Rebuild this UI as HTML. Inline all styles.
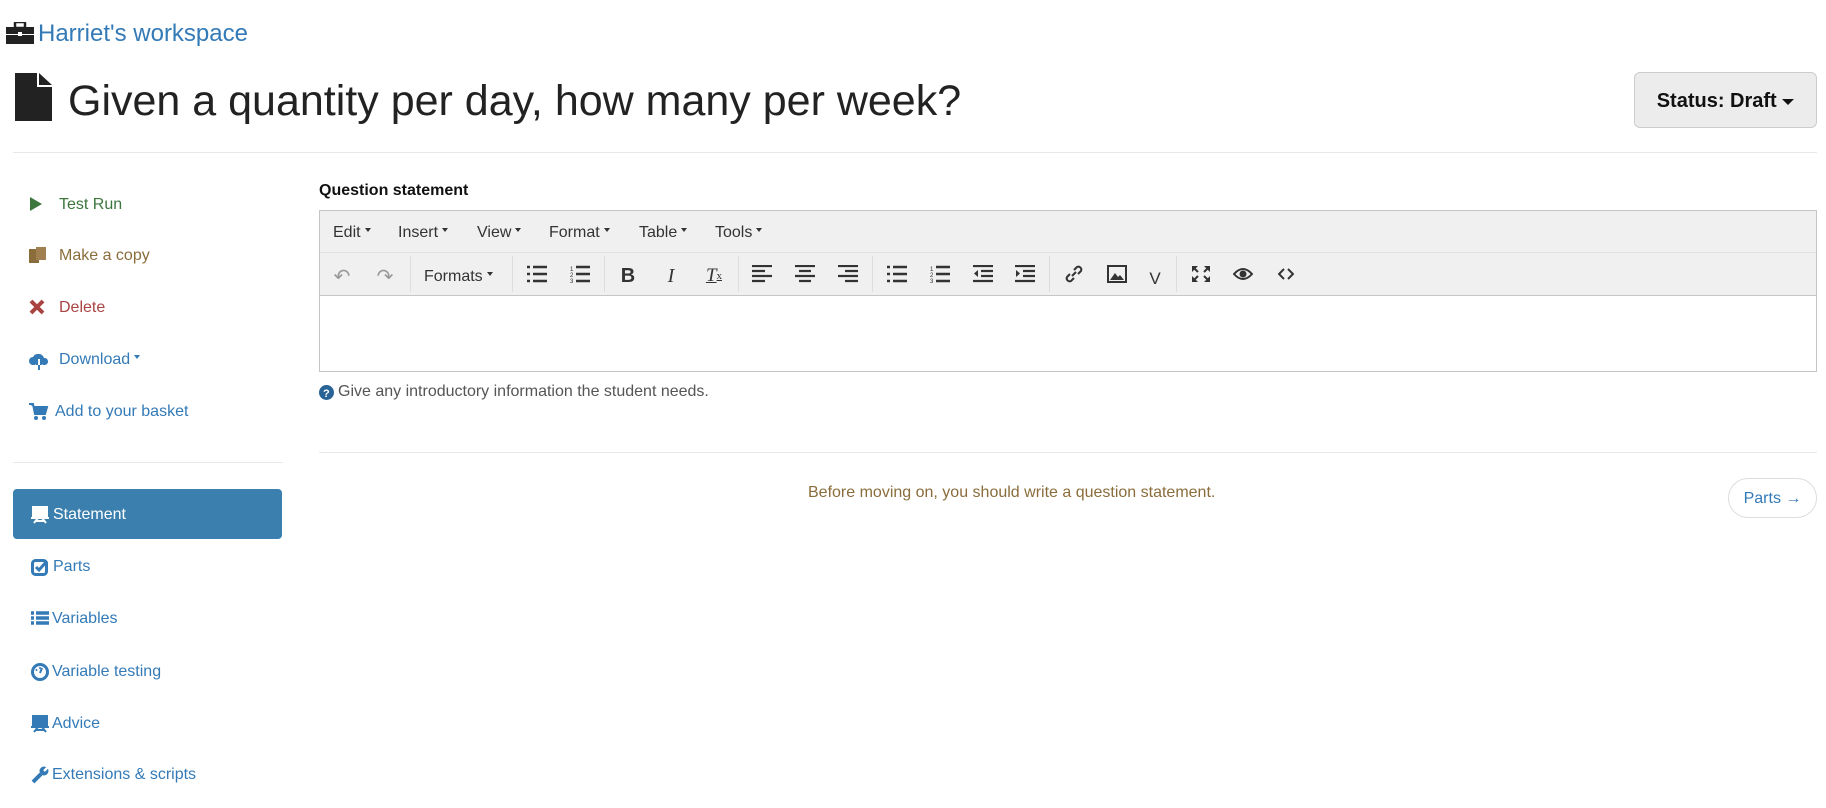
<!DOCTYPE html>
<html><head><meta charset="utf-8"><style>
*{box-sizing:border-box;margin:0;padding:0}
body{width:1826px;height:808px;background:#fff;font-family:"Liberation Sans",sans-serif;position:relative;overflow:hidden;color:#222}
.a{position:absolute;white-space:nowrap}
.hr{position:absolute;height:1px;background:#e8e8e8}
.si{position:absolute;font-size:16px;line-height:20px}
.si svg{position:absolute;top:1px}
.tb{position:absolute;top:254px;height:44px;display:flex;align-items:center;justify-content:center;width:30px;color:#333}
.sep{position:absolute;top:256px;height:36px;width:1px;background:#ddd}
.mi{position:absolute;top:224px;font-size:16px;color:#333}
.car{display:inline-block;border-left:3px solid transparent;border-right:3px solid transparent;border-top:4px solid #333;vertical-align:middle;margin-left:4px;position:relative;top:-3px}
</style></head><body>
<svg class="a" style="left:6px;top:22px" width="28" height="22" viewBox="0 0 28 22"><rect x="9" y="0" width="10" height="6" rx="1" fill="none" stroke="#222" stroke-width="2.5"/><rect x="0" y="5" width="28" height="7" fill="#222"/><rect x="0" y="13" width="28" height="9" fill="#222"/><rect x="12" y="10" width="4" height="4" fill="#fff"/></svg>
<div class="a" style="left:38px;top:20px;font-size:24px;color:#337ab7">Harriet's workspace</div>
<svg class="a" style="left:15px;top:73px" width="38" height="48" viewBox="0 0 38 48"><path d="M0 0H22V14H37V48H0Z" fill="#222"/><path d="M24 0L37 12H24Z" fill="#222"/></svg>
<div class="a" style="left:68px;top:77px;font-size:43px;color:#222">Given a quantity per day, how many per week?</div>
<div class="a" style="left:1634px;top:72px;width:183px;height:56px;background:#ececec;border:1px solid #ccc;border-radius:6px;font-size:20px;font-weight:bold;color:#111;text-align:center;line-height:56px">Status: Draft <span style="display:inline-block;border-left:6px solid transparent;border-right:6px solid transparent;border-top:6px solid #111;vertical-align:middle"></span></div>
<div class="hr" style="left:13px;top:152px;width:1804px"></div>
<div class="si" style="left:29px;top:195px;color:#3c763d"><svg width="14" height="16" style="left:0"><path d="M1 1L13 8L1 15Z" fill="#3c763d"/></svg><span style="margin-left:30px">Test Run</span></div>
<div class="si" style="left:29px;top:246px;color:#8a6d3b"><svg width="18" height="18"><rect x="0" y="2" width="10" height="14" fill="#8a6d3b"/><rect x="7" y="0" width="10" height="13" fill="#a08050"/></svg><span style="margin-left:30px">Make a copy</span></div>
<div class="si" style="left:29px;top:298px;color:#a94442"><svg width="16" height="16"><path d="M2 2L14 14M14 2L2 14" stroke="#a94442" stroke-width="4"/></svg><span style="margin-left:30px">Delete</span></div>
<div class="si" style="left:29px;top:350px;color:#337ab7"><svg width="20" height="20"><path d="M4 14a4 4 0 0 1 0-8a6 6 0 0 1 11 1a3.5 3.5 0 0 1 1 7Z" fill="#337ab7"/><path d="M10 8V18M6 14l4 4 4-4" stroke="#fff" stroke-width="2" fill="none"/><path d="M10 14V19" stroke="#337ab7" stroke-width="2"/></svg><span style="margin-left:30px">Download<span class="car" style="border-top-color:#337ab7"></span></span></div>
<div class="si" style="left:29px;top:402px;color:#337ab7"><svg width="20" height="18"><path d="M0 1H4L6 11H16L18 4H5" fill="#337ab7" stroke="#337ab7" stroke-width="2"/><circle cx="7" cy="15" r="2" fill="#337ab7"/><circle cx="15" cy="15" r="2" fill="#337ab7"/></svg><span style="margin-left:26px">Add to your basket</span></div>
<div class="hr" style="left:13px;top:462px;width:270px"></div>
<div class="a" style="left:13px;top:489px;width:269px;height:50px;background:#3a7fad;border-radius:4px"></div>
<div class="si" style="left:31px;top:505px;color:#fff"><svg width="18" height="18"><rect x="1" y="0" width="16" height="11" fill="#fff"/><path d="M0 12H18M3 17L7 12M15 17L11 12M5 15H13" stroke="#fff" stroke-width="2"/></svg><span style="margin-left:22px">Statement</span></div>
<div class="si" style="left:31px;top:557px;color:#337ab7"><svg width="18" height="18"><rect x="1.5" y="2.5" width="14" height="14" rx="3" fill="none" stroke="#337ab7" stroke-width="3"/><path d="M5 9L8 12L16 3" stroke="#337ab7" stroke-width="3" fill="none"/></svg><span style="margin-left:22px">Parts</span></div>
<div class="si" style="left:31px;top:609px;color:#337ab7"><svg width="18" height="18"><path d="M0 3H3M5 3H18M0 8H3M5 8H18M0 13H3M5 13H18" stroke="#337ab7" stroke-width="3.5"/></svg><span style="margin-left:21px">Variables</span></div>
<div class="si" style="left:31px;top:662px;color:#337ab7"><svg width="18" height="18"><circle cx="9" cy="9" r="7.5" fill="none" stroke="#337ab7" stroke-width="3"/><path d="M9 10L11 5" stroke="#337ab7" stroke-width="2"/><circle cx="5.5" cy="7" r="1" fill="#337ab7"/><circle cx="9" cy="5" r="1" fill="#337ab7"/></svg><span style="margin-left:21px">Variable testing</span></div>
<div class="si" style="left:31px;top:714px;color:#337ab7"><svg width="18" height="18"><rect x="1" y="0" width="16" height="11" fill="#337ab7"/><path d="M0 12H18M3 17L7 12M15 17L11 12M5 15H13" stroke="#337ab7" stroke-width="2"/></svg><span style="margin-left:21px">Advice</span></div>
<div class="si" style="left:31px;top:765px;color:#337ab7"><svg width="18" height="18"><path d="M2 16L10 8" stroke="#337ab7" stroke-width="4"/><circle cx="13" cy="5" r="4.5" fill="#337ab7"/><path d="M13 5L17 1" stroke="#fff" stroke-width="2.5"/></svg><span style="margin-left:21px">Extensions &amp; scripts</span></div>
<div class="a" style="left:319px;top:182px;font-size:16px;font-weight:bold;color:#111">Question statement</div>
<div class="a" style="left:319px;top:210px;width:1498px;height:162px;border:1px solid #c5c5c5;background:#fff"></div>
<div class="a" style="left:320px;top:211px;width:1496px;height:85px;background:#f0f0f0;border-bottom:1px solid #c5c5c5"></div>
<div class="a" style="left:320px;top:252px;width:1496px;height:1px;background:#e2e2e2"></div>
<div class="mi" style="left:333px">Edit<span class="car"></span></div>
<div class="mi" style="left:398px">Insert<span class="car"></span></div>
<div class="mi" style="left:477px">View<span class="car"></span></div>
<div class="mi" style="left:549px">Format<span class="car"></span></div>
<div class="mi" style="left:639px">Table<span class="car"></span></div>
<div class="mi" style="left:715px">Tools<span class="car"></span></div>
<div class="tb" style="left:327px;color:#999;font-size:20px">&#8630;</div>
<div class="tb" style="left:370px;color:#999;font-size:20px">&#8631;</div>
<div class="sep" style="left:410px"></div>
<div class="a" style="left:424px;top:268px;font-size:16px;color:#333">Formats<span class="car"></span></div>
<div class="sep" style="left:512px"></div>
<svg class="a" style="left:527px;top:265px" width="20" height="18"><path d="M0 2h3M6 2h14M0 9h3M6 9h14M0 16h3M6 16h14" stroke="#333" stroke-width="2.5"/></svg>
<svg class="a" style="left:570px;top:265px" width="20" height="18"><path d="M6 2h14M6 9h14M6 16h14" stroke="#333" stroke-width="2.5"/><text x="0" y="6" font-size="6" fill="#333">1</text><text x="0" y="12" font-size="6" fill="#333">2</text><text x="0" y="18" font-size="6" fill="#333">3</text></svg>
<div class="sep" style="left:604px"></div>
<div class="tb" style="left:613px;font-weight:bold;font-size:20px">B</div>
<div class="tb" style="left:656px;font-style:italic;font-size:20px;font-family:'Liberation Serif',serif">I</div>
<div class="tb" style="left:699px;font-style:italic;font-size:19px;font-family:'Liberation Serif',serif;text-decoration:underline">T<span style="font-size:11px;font-style:normal">x</span></div>
<div class="sep" style="left:738px"></div>
<svg class="a" style="left:752px;top:265px" width="20" height="18"><path d="M0 1h20M0 6h13M0 11h20M0 16h13" stroke="#333" stroke-width="2.2"/></svg>
<svg class="a" style="left:795px;top:265px" width="20" height="18"><path d="M0 1h20M4 6h12M0 11h20M4 16h12" stroke="#333" stroke-width="2.2"/></svg>
<svg class="a" style="left:838px;top:265px" width="20" height="18"><path d="M0 1h20M7 6h13M0 11h20M7 16h13" stroke="#333" stroke-width="2.2"/></svg>
<div class="sep" style="left:872px"></div>
<svg class="a" style="left:887px;top:265px" width="20" height="18"><path d="M0 2h3M6 2h14M0 9h3M6 9h14M0 16h3M6 16h14" stroke="#333" stroke-width="2.5"/></svg>
<svg class="a" style="left:930px;top:265px" width="20" height="18"><path d="M6 2h14M6 9h14M6 16h14" stroke="#333" stroke-width="2.5"/><text x="0" y="6" font-size="6" fill="#333">1</text><text x="0" y="12" font-size="6" fill="#333">2</text><text x="0" y="18" font-size="6" fill="#333">3</text></svg>
<svg class="a" style="left:973px;top:265px" width="20" height="18"><path d="M0 1h20M8 6h12M8 11h12M0 16h20" stroke="#333" stroke-width="2.2"/><path d="M5 5L1 8.5L5 12Z" fill="#333"/></svg>
<svg class="a" style="left:1015px;top:265px" width="20" height="18"><path d="M0 1h20M8 6h12M8 11h12M0 16h20" stroke="#333" stroke-width="2.2"/><path d="M1 5L5 8.5L1 12Z" fill="#333"/></svg>
<div class="sep" style="left:1049px"></div>
<svg class="a" style="left:1064px;top:264px" width="20" height="20"><path d="M8 12L12 8M6 10l-3 3a3 3 0 0 0 4 4l3-3M14 10l3-3a3 3 0 0 0-4-4l-3 3" stroke="#333" stroke-width="2" fill="none"/></svg>
<svg class="a" style="left:1107px;top:265px" width="20" height="18"><rect x="1" y="1" width="18" height="16" fill="none" stroke="#333" stroke-width="2"/><path d="M3 15L8 8L11 12L13 10L17 15Z" fill="#333"/></svg>
<div class="tb" style="left:1140px;font-size:17px;top:257px">V</div>
<div class="sep" style="left:1176px"></div>
<svg class="a" style="left:1191px;top:265px" width="20" height="18"><path d="M1 1h6L1 7ZM19 1h-6l6 6ZM1 17h6L1 11ZM19 17h-6l6-6Z" fill="#333"/><path d="M3 3l4 4M17 3l-4 4M3 15l4-4M17 15l-4-4" stroke="#333" stroke-width="2"/></svg>
<svg class="a" style="left:1233px;top:265px" width="20" height="18"><path d="M1 9Q10 -1 19 9Q10 19 1 9Z" fill="none" stroke="#333" stroke-width="2"/><circle cx="10" cy="9" r="3.5" fill="#333"/></svg>
<svg class="a" style="left:1278px;top:268px" width="16" height="12"><path d="M6 1L1 6L6 11M10 1L15 6L10 11" stroke="#333" stroke-width="2" fill="none"/></svg>
<svg class="a" style="left:319px;top:385px" width="15" height="15"><circle cx="7.5" cy="7.5" r="7.5" fill="#2a6496"/><text x="4" y="12" font-size="11" font-weight="bold" fill="#fff" font-family="Liberation Sans">?</text></svg>
<div class="a" style="left:338px;top:383px;font-size:16px;color:#555">Give any introductory information the student needs.</div>
<div class="hr" style="left:319px;top:452px;width:1498px"></div>
<div class="a" style="left:808px;top:484px;font-size:16px;color:#8a6d3b">Before moving on, you should write a question statement.</div>
<div class="a" style="left:1728px;top:478px;width:89px;height:40px;border:1px solid #ddd;border-radius:20px;font-size:16px;color:#337ab7;text-align:center;line-height:40px">Parts &#8594;</div>
</body></html>
